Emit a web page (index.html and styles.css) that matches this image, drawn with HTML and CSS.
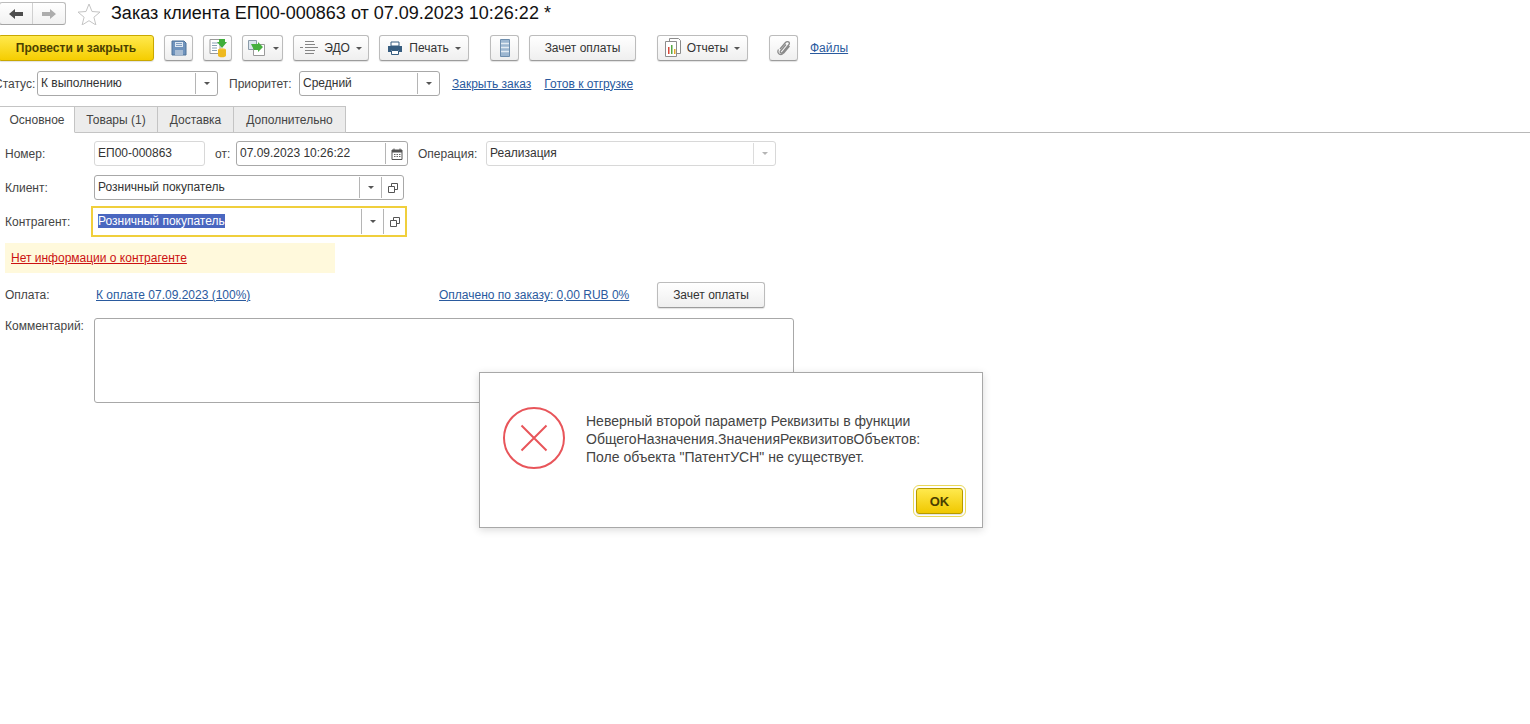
FILE: index.html
```html
<!DOCTYPE html>
<html lang="ru">

<head>
  <meta charset="UTF-8">
  <title>Заказ клиента</title>
  <link rel="stylesheet" href="styles.css">
</head>

<body>
  <div class="page">

    <div class="title-row">
      <div class="nav-group">
        <div class="nav-btn">
          <svg width="16" height="12" viewBox="0 0 16 12"><path d="M1 6l6-5v3h8v4H7v3z" fill="#4d4d4d"/></svg>
        </div>
        <div class="nav-btn">
          <svg width="16" height="12" viewBox="0 0 16 12"><path d="M15 6L9 1v3H1v4h8v3z" fill="#adadad"/></svg>
        </div>
      </div>
      <svg class="star" width="24" height="22" viewBox="0 0 24 22"><path d="M12 1l3 7.5 8 .6-6.100 5.100 2 7.800-6.900-4.300-6.900 4.300 2-7.800L1 9.100l8-.6z" fill="#fff" stroke="#c4c4c4"/></svg>
      <h1 class="title">Заказ клиента ЕП00-000863 от 07.09.2023 10:26:22 *</h1>
    </div>

    <div class="toolbar">
      <button class="btn btn-main">Провести и закрыть</button>
      <button class="btn btn-icon">
        <svg width="18" height="18" viewBox="0 0 18 18"><path d="M2 2h12l2 2v12H2z" fill="#6f93bd" stroke="#4f7299"/><path d="M5 3h8v5H5z" fill="#dfe8f2"/><path d="M5 11h8v5H5z" fill="#a9bdd4"/><path d="M6 4.500h6M6 6.500h6" stroke="#7f9dc0"/></svg>
      </button>
      <button class="btn btn-icon">
        <svg width="20" height="20" viewBox="0 0 20 20"><path d="M2 1.500h10v14H2z" fill="#fff" stroke="#9a9a9a"/><path d="M4 5h6M4 7.500h5M4 10h5M4 12.500h5" stroke="#8aa0b5"/><ellipse cx="14" cy="12" rx="4" ry="1.800" fill="#f2c230"/><path d="M10 12v5.500c0 1 1.800 1.800 4 1.800s4-.8 4-1.800V12z" fill="#eeb91f"/><path d="M11 1h6v3h2l-5 6-5-6h2z" fill="#3fae3a"/></svg>
      </button>
      <button class="btn btn-drop btn-copy">
        <svg width="20" height="18" viewBox="0 0 20 18"><path d="M1.500 1.500h8v9h-8z" fill="#dce6ef" stroke="#8a9aa8"/><path d="M6.500 5.500h11v11h-11z" fill="#fff" stroke="#9a9a9a"/><path d="M4 5l7 0 0-2 5 5-5 5 0-2-4 0z" fill="#46b03f"/></svg>
        <i class="arrow"></i>
      </button>
      <button class="btn btn-drop btn-edo">
        <svg width="18" height="16" viewBox="0 0 18 16"><path d="M5 1.500h9M5 4.500h10M5 7.500h10M5 10.500h10M5 13.500h9M3 7.500H0M15 7.500h3" stroke="#858585" fill="none"/></svg>
        <span>ЭДО</span>
        <i class="arrow"></i>
      </button>
      <button class="btn btn-drop btn-print">
        <svg width="16" height="15" viewBox="0 0 16 15"><path d="M4 1h8v4H4z" fill="#fff" stroke="#375d80"/><path d="M1 5h14v6h-3V9H4v2H1z" fill="#375d80"/><path d="M4.500 9.500h7v4h-7z" fill="#fff" stroke="#375d80"/></svg>
        <span>Печать</span>
        <i class="arrow"></i>
      </button>
      <button class="btn btn-icon btn-list">
        <svg width="10" height="18" viewBox="0 0 10 18"><path d="M.5.500h9v17h-9z" fill="#9db7d1" stroke="#6e8eae"/><path d="M1 4.500h8M1 8.500h8M1 12.500h8" stroke="#e3ebf3" stroke-width="1.500"/></svg>
      </button>
      <button class="btn btn-text">Зачет оплаты</button>
      <button class="btn btn-drop btn-reports">
        <svg width="16" height="20" viewBox="0 0 16 20"><path d="M4.500 .5h9l2 2v13h-11z" fill="#fff" stroke="#8c8c8c"/><path d="M.5 3.500h11v15H.5z" fill="#fff" stroke="#8c8c8c"/><path d="M3 9h1.500v7H3z" fill="#d8483a"/><path d="M6 7h1.500v9H6z" fill="#57a845"/><path d="M9 11h1.500v5H9z" fill="#e4a82c"/></svg>
        <span>Отчеты</span>
        <i class="arrow"></i>
      </button>
      <button class="btn btn-icon btn-clip">
        <svg width="14" height="16" viewBox="0 0 14 16"><path d="M3 9l5.500-6.500c1.800-2 5-.2 3.500 2L5.500 12.500c-1 1.200-3 0-2-1.500L9 4.500M1.500 9.500c-1.500 2.500 0 5 2.500 5 1 0 2-.5 2.700-1.500l5.800-7" fill="none" stroke="#8a8a8a" stroke-width="1.300"/></svg>
      </button>
      <a class="link link-files" href="#">Файлы</a>
    </div>

    <div class="status-row">
      <span class="label label-status">Статус:</span>
      <div class="field field-status">
        <span class="field-value">К выполнению</span>
        <span class="field-cell"><i class="arrow"></i></span>
      </div>
      <span class="label label-priority">Приоритет:</span>
      <div class="field field-priority">
        <span class="field-value">Средний</span>
        <span class="field-cell"><i class="arrow"></i></span>
      </div>
      <a class="link link-close" href="#">Закрыть заказ</a>
      <a class="link link-ready" href="#">Готов к отгрузке</a>
    </div>

    <div class="tabs">
      <div class="tab tab-active">Основное</div>
      <div class="tab tab-goods">Товары (1)</div>
      <div class="tab tab-delivery">Доставка</div>
      <div class="tab tab-extra">Дополнительно</div>
    </div>

    <div class="form">
      <div class="form-row row-number">
        <span class="label label-form">Номер:</span>
        <div class="field field-number field-light"><span class="field-value">ЕП00-000863</span></div>
        <span class="label label-from">от:</span>
        <div class="field field-date">
          <span class="field-value">07.09.2023 10:26:22</span>
          <span class="field-cell cell-date">
            <svg width="12" height="12" viewBox="0 0 12 12"><path d="M1 2h10v9.500H1z" fill="#fff" stroke="#555"/><path d="M1 2h10v2.500H1z" fill="#555"/><path d="M3 .5v2M9 .5v2" stroke="#555"/><path d="M3 6.500h1.500M5.500 6.500H7M8 6.500h1.500M3 8.500h1.500M5.500 8.500H7M8 8.500h1.500" stroke="#666"/></svg>
          </span>
        </div>
        <span class="label label-operation">Операция:</span>
        <div class="field field-operation field-light">
          <span class="field-value">Реализация</span>
          <span class="field-cell"><i class="arrow arrow-off"></i></span>
        </div>
      </div>

      <div class="form-row row-client">
        <span class="label label-form">Клиент:</span>
        <div class="field field-client">
          <span class="field-value">Розничный покупатель</span>
          <span class="field-cell"><i class="arrow"></i></span>
          <span class="field-cell">
            <svg class="open-icon" width="10" height="10" viewBox="0 0 10 10"><path d="M3.500.5h6v6h-6z" fill="#fff" stroke="#555"/><path d="M.5 3.500h6v6h-6z" fill="#fff" stroke="#555"/></svg>
          </span>
        </div>
      </div>

      <div class="form-row row-partner">
        <span class="label label-form">Контрагент:</span>
        <div class="field field-partner">
          <span class="field-value"><span class="selected">Розничный покупатель</span></span>
          <span class="field-cell"><i class="arrow"></i></span>
          <span class="field-cell">
            <svg class="open-icon" width="10" height="10" viewBox="0 0 10 10"><path d="M3.500.5h6v6h-6z" fill="#fff" stroke="#555"/><path d="M.5 3.500h6v6h-6z" fill="#fff" stroke="#555"/></svg>
          </span>
        </div>
      </div>

      <div class="warning"><a class="link-warning" href="#">Нет информации о контрагенте</a></div>

      <div class="form-row row-payment">
        <span class="label label-form">Оплата:</span>
        <a class="link link-terms" href="#">К оплате 07.09.2023 (100%)</a>
        <a class="link link-paid" href="#">Оплачено по заказу: 0,00 RUB 0%</a>
        <button class="btn btn-offset">Зачет оплаты</button>
      </div>

      <div class="form-row row-comment">
        <span class="label label-form label-comment">Комментарий:</span>
        <div class="comment"></div>
      </div>
    </div>
  </div>

  <div class="dialog">
    <svg class="dialog-icon" width="64" height="64" viewBox="0 0 64 64">
      <circle cx="32" cy="32" r="30" fill="#fff" stroke="#e8555a" stroke-width="2"/>
      <path d="M19.500 19.500l25 25M44.500 19.500l-25 25" stroke="#e8555a" stroke-width="2" fill="none"/>
    </svg>
    <p class="dialog-text">Неверный второй параметр Реквизиты в функции<br>ОбщегоНазначения.ЗначенияРеквизитовОбъектов:<br>Поле объекта "ПатентУСН" не существует.</p>
    <button class="btn btn-ok">OK</button>
  </div>
</body>

</html>
```

FILE: styles.css
```css
html, body {
  height: 100%;
}

body {
  margin: 0;
  overflow: hidden;
  background-color: #ffffff;
  font-family: "Liberation Sans", Arial, sans-serif;
  font-size: 12px;
  color: #333333;
}

.page {
  width: 1530px;
}

/* title */
.title-row {
  display: flex;
  align-items: center;
  height: 25px;
  padding-top: 1px;
}

.nav-group {
  display: flex;
  width: 67px;
  height: 23px;
  margin-left: -1px;
  border: 1px solid #bdbdbd;
  border-bottom-color: #a5a5a5;
  border-radius: 3px;
  box-sizing: border-box;
  background: linear-gradient(#ffffff, #f1f1f1);
}

.nav-btn {
  display: flex;
  flex: 1;
  align-items: center;
  justify-content: center;
}

.nav-btn + .nav-btn {
  border-left: 1px solid #d0d0d0;
}

.star {
  margin-left: 11px;
}

.title {
  margin: 0 0 0 10px;
  font-size: 18px;
  font-weight: normal;
  color: #111111;
  white-space: nowrap;
}

/* buttons */
.btn {
  display: flex;
  align-items: center;
  justify-content: center;
  height: 26px;
  padding: 0;
  box-sizing: border-box;
  border: 1px solid #bcbcbc;
  border-bottom-color: #9c9c9c;
  border-radius: 3px;
  background: linear-gradient(#ffffff, #efefef);
  box-shadow: 0 1px 1px rgba(0, 0, 0, 0.12);
  font-family: inherit;
  font-size: 12px;
  color: #333333;
}

.toolbar {
  display: flex;
  align-items: center;
  height: 26px;
  margin-top: 9px;
  margin-left: -2px;
}

.toolbar .btn {
  flex: none;
  margin-right: 10px;
}

.btn-main {
  width: 156px;
  border-color: #c9a800;
  background: linear-gradient(#ffe94d, #f5cd00);
  font-weight: bold;
  color: #4a3f00;
}

.btn-icon {
  width: 29px;
}

.btn-copy {
  width: 41px;
}

.btn-edo {
  width: 76px;
}

.btn-print {
  width: 90px;
}

.btn-drop {
  gap: 6px;
}

.toolbar .btn-print {
  margin-right: 21px;
}

.toolbar .btn-text {
  width: 107px;
  margin-right: 21px;
}

.toolbar .btn-reports {
  width: 91px;
  margin-right: 21px;
}

.toolbar .btn-clip {
  margin-right: 12px;
}

.arrow {
  display: block;
  width: 0;
  height: 0;
  border-left: 3px solid transparent;
  border-right: 3px solid transparent;
  border-top: 3px solid #555555;
}

.arrow-off {
  border-top-color: #b5b5b5;
}

.link {
  color: #2a5a9e;
  text-decoration: underline;
  white-space: nowrap;
}

/* status row */
.status-row {
  display: flex;
  align-items: center;
  height: 25px;
  margin-top: 10px;
}

.label {
  color: #444444;
  white-space: nowrap;
}

.label-status {
  width: 43px;
  margin-left: -6px;
  flex: none;
}

.label-priority {
  width: 70px;
  margin-left: 11px;
  flex: none;
}

.link-close {
  margin-left: 12px;
}

.link-ready {
  margin-left: 13px;
}

/* fields */
.field {
  display: flex;
  align-items: stretch;
  height: 25px;
  box-sizing: border-box;
  flex: none;
  border: 1px solid #a8a8a8;
  border-radius: 3px;
  background-color: #ffffff;
}

.field-light {
  border-color: #d8d8d8;
}

.field-value {
  flex: 1;
  padding-left: 3px;
  line-height: 23px;
  color: #333333;
  white-space: nowrap;
}

.field-cell {
  display: flex;
  align-items: center;
  justify-content: center;
  width: 21px;
  margin: 1px 0;
  border-left: 1px solid #b5b5b5;
}

.field-light .field-cell {
  border-left-color: #dcdcdc;
}

.field-status {
  width: 181px;
}

.field-priority {
  width: 141px;
}

/* tabs */
.tabs {
  display: flex;
  align-items: flex-end;
  height: 28px;
  margin-top: 9px;
  box-sizing: border-box;
  border-bottom: 1px solid #b8b8b8;
}

.tab {
  display: flex;
  align-items: center;
  justify-content: center;
  height: 27px;
  box-sizing: border-box;
  margin-bottom: -1px;
  border: 1px solid #c4c4c4;
  border-left: 0;
  background-color: #ececec;
  color: #444444;
}

.tab-active {
  width: 75px;
  border-bottom: 1px solid #ffffff;
  background-color: #ffffff;
}

.tab-goods {
  width: 83px;
}

.tab-delivery {
  width: 76px;
}

.tab-extra {
  width: 112px;
}

/* form */
.form {
  padding: 8px 0 0 5px;
}

.form-row {
  display: flex;
  align-items: center;
}

.label-form {
  width: 89px;
  flex: none;
}

.row-number {
  height: 25px;
}

.field-number {
  width: 111px;
}

.label-from {
  width: 21px;
  margin-left: 10px;
  flex: none;
}

.field-date {
  width: 172px;
}

.cell-date {
  width: 21px;
}

.label-operation {
  width: 68px;
  margin-left: 10px;
  flex: none;
}

.field-operation {
  width: 290px;
}

.row-client {
  height: 25px;
  margin-top: 9px;
}

.field-client {
  width: 310px;
}

.row-partner {
  height: 31px;
  margin-top: 6px;
}

.row-partner .label-form {
  width: 86px;
}

.field-partner {
  width: 316px;
  height: 31px;
  border: 2px solid #f0cf3c;
  border-radius: 0;
}

.field-partner .field-value {
  padding-left: 5px;
  line-height: 27px;
}

.selected {
  background-color: #4a67c0;
  color: #ffffff;
}

.warning {
  display: flex;
  align-items: center;
  width: 324px;
  height: 30px;
  margin-top: 6px;
  padding-left: 6px;
  background-color: #fff9dc;
}

.link-warning {
  color: #cc1111;
  text-decoration: underline;
}

.row-payment {
  height: 26px;
  margin-top: 9px;
}

.link-terms {
  margin-left: 2px;
  width: 343px;
  flex: none;
}

.link-paid {
  width: 218px;
  flex: none;
}

.btn-offset {
  width: 108px;
}

.row-comment {
  align-items: flex-start;
  margin-top: 10px;
}

.label-comment {
  padding-top: 1px;
}

.comment {
  width: 700px;
  height: 85px;
  box-sizing: border-box;
  border: 1px solid #a8a8a8;
  border-radius: 3px;
}

/* message box */
.dialog {
  position: absolute;
  left: 479px;
  top: 372px;
  width: 504px;
  height: 156px;
  box-sizing: border-box;
  border: 1px solid #a8a8a8;
  background-color: #ffffff;
  box-shadow: 0 2px 8px rgba(0, 0, 0, 0.15);
}

.dialog-icon {
  position: absolute;
  left: 22px;
  top: 33px;
}

.dialog-text {
  position: absolute;
  left: 106px;
  top: 39px;
  margin: 0;
  font-size: 14px;
  line-height: 18px;
  color: #444444;
  white-space: nowrap;
}

.btn-ok {
  position: absolute;
  left: 436px;
  top: 115px;
  width: 47px;
  height: 26px;
  border-color: #b59a00;
  background: linear-gradient(#ffe94d, #f0c800);
  outline: 1px solid #e9d85a;
  outline-offset: 2px;
  font-size: 13px;
  font-weight: bold;
  color: #4a3f00;
}
```
